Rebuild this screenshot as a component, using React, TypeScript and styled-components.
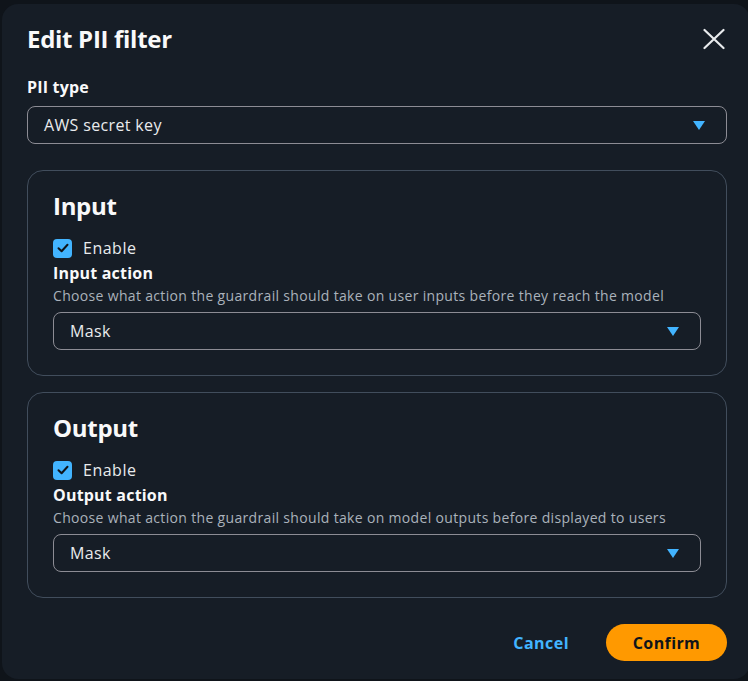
import React, { useState } from 'react';
import styled, { createGlobalStyle } from 'styled-components';

const colors = {
  page: '#0f141a',
  modal: '#161d26',
  text: '#e9ebed',
  heading: '#f9f9fa',
  muted: '#aab2bb',
  border: '#414d5c',
  inputBorder: '#8c8c94',
  accent: '#42b4ff',
  orange: '#ff9900',
};

const GlobalStyle = createGlobalStyle`
  html, body {
    margin: 0;
    padding: 0;
    background: ${colors.page};
    overflow: hidden;
  }
  body {
    font-family: "Open Sans", "Noto Sans", sans-serif;
    color: ${colors.text};
  }
  * { box-sizing: border-box; }
`;

const Backdrop = styled.div`
  width: 748px;
  height: 681px;
  padding: 4px 0 0 2px;
  overflow: hidden;
`;

const Modal = styled.div`
  width: 748px;
  height: 675px;
  background: ${colors.modal};
  border-radius: 16px;
  padding: 19px 23px 0 25px;
  display: flex;
  flex-direction: column;
`;

const Header = styled.div`
  display: flex;
  align-items: center;
  justify-content: space-between;
  height: 32px;
`;

const Title = styled.h1`
  margin: 0;
  font-size: 24px;
  line-height: 32px;
  font-weight: 700;
  color: ${colors.heading};
  letter-spacing: -0.3px;
`;

const CloseButton = styled.button`
  background: none;
  border: none;
  padding: 0;
  width: 26px;
  height: 26px;
  display: flex;
  align-items: center;
  justify-content: center;
  cursor: pointer;
`;

const Field = styled.div`
  display: flex;
  flex-direction: column;
  margin-top: 21px;
`;

const Label = styled.div`
  font-size: 16px;
  line-height: 22px;
  font-weight: 700;
  color: ${colors.heading};
  letter-spacing: 0.2px;
`;

const SelectBox = styled.div<{ $gap: number }>`
  margin-top: ${(p) => p.$gap}px;
  height: 38px;
  border: 1px solid ${colors.inputBorder};
  border-radius: 8px;
  display: flex;
  align-items: center;
  justify-content: space-between;
  padding: 0 21px 0 16px;
  font-size: 16px;
  letter-spacing: 0.35px;
  color: ${colors.text};
  cursor: pointer;
`;

const Caret = styled.span`
  width: 0;
  height: 0;
  border-left: 6.5px solid transparent;
  border-right: 6.5px solid transparent;
  border-top: 9px solid ${colors.accent};
  margin-top: 1px;
`;

const Section = styled.section<{ $top: number }>`
  margin-top: ${(p) => p.$top}px;
  height: 206px;
  border: 1px solid ${colors.border};
  border-radius: 16px;
  padding: 20px 25px 0 25px;
  display: flex;
  flex-direction: column;
`;

const SectionTitle = styled.h2`
  margin: 0;
  font-size: 24px;
  line-height: 30px;
  font-weight: 700;
  color: ${colors.heading};
  letter-spacing: -0.3px;
`;

const CheckRow = styled.label`
  margin-top: 16px;
  display: flex;
  align-items: center;
  gap: 11px;
  height: 22px;
  font-size: 16px;
  letter-spacing: 0.5px;
  color: ${colors.text};
  cursor: pointer;
`;

const CheckBox = styled.span<{ $on: boolean }>`
  width: 19px;
  height: 19px;
  border-radius: 4px;
  background: ${(p) => (p.$on ? colors.accent : 'transparent')};
  border: ${(p) => (p.$on ? 'none' : `2px solid ${colors.inputBorder}`)};
  display: flex;
  align-items: center;
  justify-content: center;
`;

const ActionLabel = styled(Label)`
  margin-top: 3px;
`;

const Description = styled.div`
  font-size: 14px;
  line-height: 20px;
  letter-spacing: 0.33px;
  color: ${colors.muted};
  margin-top: 2px;
`;

const Footer = styled.div`
  margin-top: 26px;
  display: flex;
  justify-content: flex-end;
  align-items: center;
  gap: 17px;
`;

const LinkButton = styled.button`
  background: none;
  border: none;
  color: ${colors.accent};
  font-family: inherit;
  font-size: 16px;
  font-weight: 700;
  padding: 0 20px;
  height: 37px;
  letter-spacing: 0.45px;
  cursor: pointer;
`;

const PrimaryButton = styled.button`
  background: ${colors.orange};
  border: none;
  border-radius: 20px;
  color: ${colors.page};
  font-family: inherit;
  font-size: 16px;
  font-weight: 700;
  height: 37px;
  padding: 0 20px;
  min-width: 121px;
  letter-spacing: 0.4px;
  cursor: pointer;
`;

const Select: React.FC<{ value: string; gap: number }> = ({ value, gap }) => (
  <SelectBox $gap={gap}>
    <span>{value}</span>
    <Caret />
  </SelectBox>
);

const FilterSection: React.FC<{ title: string; action: string; hint: string; top: number }> = ({
  title,
  action,
  hint,
  top,
}) => {
  const [on, setOn] = useState(true);
  return (
    <Section $top={top}>
      <SectionTitle>{title}</SectionTitle>
      <CheckRow onClick={() => setOn(!on)}>
        <CheckBox $on={on}>
          {on && (
            <svg width="12" height="10" viewBox="0 0 12 10">
              <path d="M1.5 5.2 L4.6 8.2 L10.5 1.8" fill="none" stroke="#0f141a" strokeWidth="2" strokeLinecap="round" strokeLinejoin="round" />
            </svg>
          )}
        </CheckBox>
        Enable
      </CheckRow>
      <ActionLabel>{action}</ActionLabel>
      <Description>{hint}</Description>
      <Select value="Mask" gap={6} />
    </Section>
  );
};

const App: React.FC = () => (
  <>
    <GlobalStyle />
    <Backdrop>
      <Modal>
        <Header>
          <Title>Edit PII filter</Title>
          <CloseButton aria-label="Close">
            <svg width="22" height="22" viewBox="0 0 22 22">
              <path d="M1.5 2 L20.5 20 M20.5 2 L1.5 20" stroke="#e9ebed" strokeWidth="2.2" strokeLinecap="round" />
            </svg>
          </CloseButton>
        </Header>
        <Field>
          <Label>PII type</Label>
          <Select value="AWS secret key" gap={8} />
        </Field>
        <FilterSection
          top={26}
          title="Input"
          action="Input action"
          hint="Choose what action the guardrail should take on user inputs before they reach the model"
        />
        <FilterSection
          top={16}
          title="Output"
          action="Output action"
          hint="Choose what action the guardrail should take on model outputs before displayed to users"
        />
        <Footer>
          <LinkButton>Cancel</LinkButton>
          <PrimaryButton>Confirm</PrimaryButton>
        </Footer>
      </Modal>
    </Backdrop>
  </>
);

export default App;
